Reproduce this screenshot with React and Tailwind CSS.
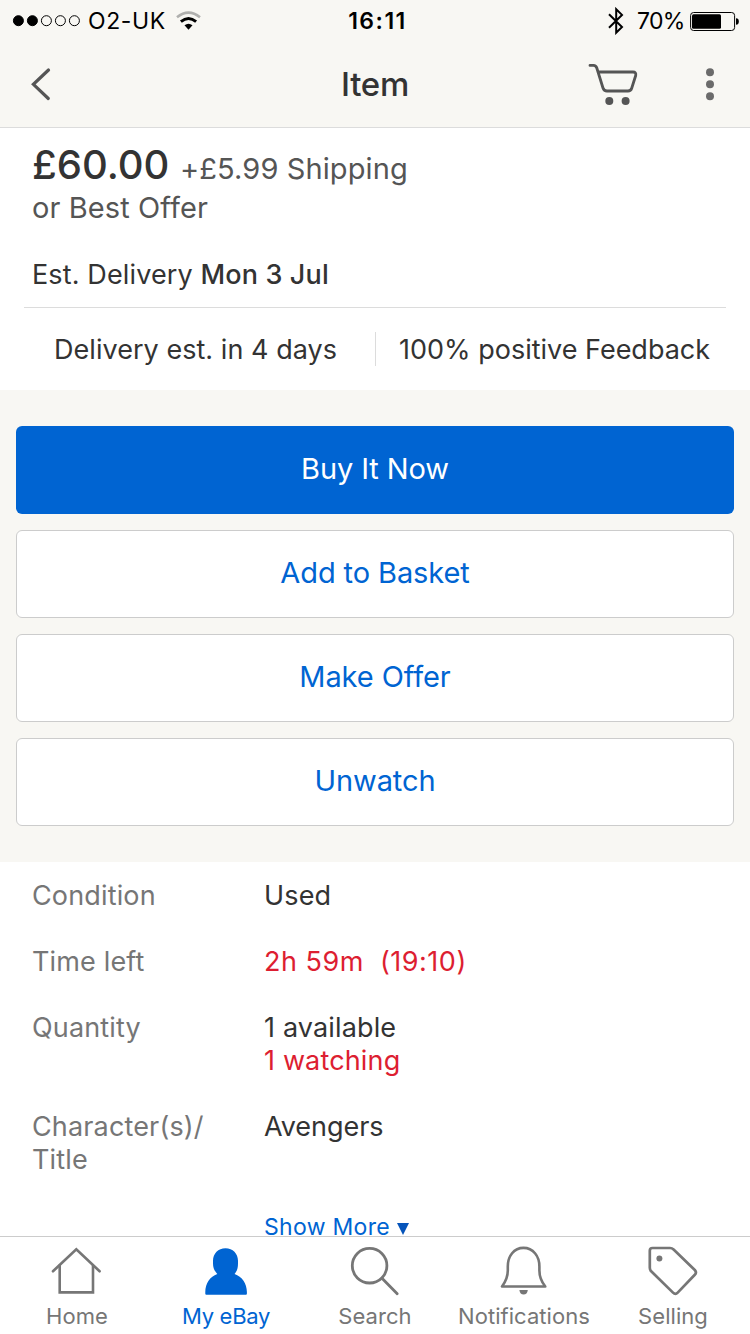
import { useState } from "react";

const HomeIcon = () => (
  <svg width="51" height="52" viewBox="0 0 51 52" fill="none" stroke="currentColor" strokeWidth="2.6" strokeLinecap="round">
    <path d="M2 26.3 L25.3 4.2 L48.6 26.3" />
    <path d="M8.7 20.5 V47.4 H42 V20.5" />
  </svg>
);

const PersonIcon = () => (
  <svg width="51" height="52" viewBox="0 0 51 52" fill="currentColor">
    <path d="M25.5 3.3 C18.2 3.3 13 8.6 13 15.8 V18.5 C13 22.8 14.7 26.4 17.3 28.9 C10 31.4 5.3 38.5 5.3 47 V48.7 Q5.3 49.7 6.3 49.7 H45.9 Q46.9 49.7 46.9 48.7 V47 C46.9 38.5 42 31.4 34.6 28.9 C37 26.4 38 22.8 38 18.5 V15.8 C38 8.6 32.8 3.3 25.5 3.3 Z" />
  </svg>
);

const SearchIcon = () => (
  <svg width="51" height="52" viewBox="0 0 51 52" fill="none" stroke="currentColor" strokeWidth="2.8" strokeLinecap="round">
    <circle cx="20.6" cy="20.7" r="17.3" />
    <path d="M33 33.3 L48.2 48.8" />
  </svg>
);

const BellIcon = () => (
  <svg width="51" height="52" viewBox="0 0 51 52" fill="none" stroke="currentColor" strokeWidth="2.6" strokeLinejoin="round">
    <path d="M25.5 2.9 C16 2.9 9.8 11 9.8 21.5 V25.5 C9.8 33 7 37.5 4 41.5 H47.3 C44 37.5 41.4 33 41.4 25.5 V21.5 C41.4 11 35 2.9 25.5 2.9 Z" />
    <path d="M21.4 45 H29.8 Q29.2 49.6 25.6 49.6 Q22 49.6 21.4 45 Z" fill="currentColor" stroke="none" />
  </svg>
);

const TagIcon = () => (
  <svg width="51" height="52" viewBox="0 0 51 52" fill="none" stroke="currentColor" strokeWidth="2.7" strokeLinejoin="round">
    <path d="M5.5 3 H23 Q25 3 26.6 4.5 L47.8 25 Q50 27.5 47.8 29.8 L30.7 47.6 Q28.4 50 26 47.6 L4.2 26.3 Q2.8 24.8 2.8 22.8 V5.7 Q2.8 3 5.5 3 Z" />
    <circle cx="12.4" cy="13.4" r="3" fill="currentColor" stroke="none" />
  </svg>
);

const tabs = [
  { label: "Home", icon: HomeIcon },
  { label: "My eBay", icon: PersonIcon },
  { label: "Search", icon: SearchIcon },
  { label: "Notifications", icon: BellIcon },
  { label: "Selling", icon: TagIcon },
];

function StatusBar() {
  return (
    <div className="grid h-10 grid-cols-3 text-[23px] leading-10 text-black">
      <div className="flex items-center pl-3">
        <svg width="70" height="14" viewBox="0 0 70 14" stroke="black">
          <circle cx="6.4" cy="6.7" r="5" fill="black" />
          <circle cx="20.4" cy="6.7" r="5" fill="black" />
          <circle cx="34.4" cy="6.7" r="5" fill="none" />
          <circle cx="48.4" cy="6.7" r="5" fill="none" />
          <circle cx="62.4" cy="6.7" r="5" fill="none" />
        </svg>
        <span className="ml-1.5 w-[88px] whitespace-nowrap pt-px tracking-[0.6px]">O2-UK</span>
        <svg width="26" height="20" viewBox="0 0 26 20" fill="none">
          <path d="M1 6.2 Q12.5 -2.9 24 6.2" stroke="#b0b0ae" strokeWidth="2.6" />
          <path d="M4.9 10.7 Q12.5 4.3 20.1 10.7" stroke="black" strokeWidth="2.9" />
          <path d="M8.5 14.3 Q12.5 11 16.5 14.3 L12.5 18.8 Z" fill="black" />
        </svg>
      </div>

      <div className="pt-px pl-[5px] text-center font-semibold tracking-[1.5px]">16:11</div>

      <div className="flex items-center justify-end pr-[10px]">
        <svg width="18" height="28" viewBox="0 0 18 28" fill="none" stroke="black" strokeWidth="2">
          <path d="M2 7.2 L15 20 L9.2 25.7 V2.2 L15 7.9 L2 20.7" />
        </svg>
        <span className="ml-3 w-[53px] whitespace-nowrap pt-px tracking-[-0.7px]">70%</span>
        <svg width="50" height="20" viewBox="0 0 50 20">
          <rect x="0.6" y="1.5" width="44" height="18" rx="3" fill="none" stroke="black" />
          <rect x="2" y="3.2" width="29" height="14.6" rx="1.5" fill="black" />
          <path d="M46 7.2 Q48.8 7.2 48.8 10.5 Q48.8 13.8 46 13.8 Z" fill="black" />
        </svg>
      </div>
    </div>
  );
}

function NavBar() {
  return (
    <div className="grid h-[87px] grid-cols-3 items-center">
      <svg className="ml-7" width="26" height="36" viewBox="0 0 26 36" fill="none" stroke="#555" strokeWidth="3.2" strokeLinecap="round">
        <path d="M20.5 4 L5.4 18.3 L20.3 32.5" />
      </svg>
      <h1 className="pt-px text-center text-[33px] leading-10 font-medium tracking-[-0.3px]">Item</h1>
      <div className="flex items-center justify-end pr-[30px]">
        <svg width="52" height="44" viewBox="0 0 52 44" fill="none" stroke="#555" strokeWidth="2.8" strokeLinecap="round" strokeLinejoin="round">
          <path d="M3 3.4 H6.5 Q9 3.4 9.8 6 L16 26 Q17 29 20 29 H41 Q43.8 29 44.7 26.2 L48.7 13.5 Q49.4 10 46 10 H11.2" />
          <circle cx="22.3" cy="39" r="4" fill="#555" stroke="none" />
          <circle cx="38.6" cy="39" r="4" fill="#555" stroke="none" />
        </svg>
        <svg className="ml-[66px]" width="15" height="36" viewBox="0 0 15 36" fill="#6b6b6b">
          <circle cx="5" cy="6.3" r="4" />
          <circle cx="5" cy="18.3" r="4" />
          <circle cx="5" cy="30.3" r="4" />
        </svg>
      </div>
    </div>
  );
}

function Row({ label, children }) {
  return (
    <div className="flex">
      <div className="w-[232px] pr-8 text-[#767676]">{label}</div>
      <div>{children}</div>
    </div>
  );
}

function App() {
  const [active, setActive] = useState("My eBay");

  return (
    <div className="flex h-[1334px] w-[750px] flex-col overflow-hidden bg-white font-['Inter',sans-serif] text-[#333]">
      <header className="h-32 shrink-0 border-b border-[#dcdcdc] bg-[#f8f7f3]">
        <StatusBar />
        <NavBar />
      </header>

      <main className="min-h-0 flex-1 overflow-hidden">
        {/* Price */}
        <section className="h-[262px] px-6 pt-3">
          <div className="px-2">
            <div className="flex h-[50px] items-baseline leading-[50px]">
              <span className="w-[148px] text-[40px] font-medium">£60.00</span>
              <span className="text-[29px] tracking-[0.1px] text-[#555]">+£5.99 Shipping</span>
            </div>
            <div className="pt-px text-[29px] leading-[34px] tracking-[0.1px] text-[#555]">or Best Offer</div>
            <div className="mt-[33px] text-[27px] leading-[34px] tracking-[0.13px]">
              Est. Delivery <span className="font-medium">Mon 3 Jul</span>
            </div>
          </div>
          <div className="mt-[15px] flex items-start border-t border-[#dcdcdc] pt-6 text-[27px] leading-[34px] tracking-[0.04px]">
            <div className="w-[351px] pt-px pl-[30px]">Delivery est. in 4 days</div>
            <div className="h-[34px] flex-1 whitespace-nowrap border-l border-[#dcdcdc] pt-px pl-[23px] tracking-normal">
              100% positive Feedback
            </div>
          </div>
        </section>

        {/* Actions */}
        <section className="flex h-[472px] flex-col gap-4 bg-[#f8f7f3] px-4 py-9 text-[29px] tracking-[-0.1px] text-[#0064d2]">
          <button className="h-[88px] rounded-md bg-[#0064d2] pb-0.5 text-white">Buy It Now</button>
          <button className="h-[88px] rounded-md border border-[#ccc] bg-white pb-0.5">Add to Basket</button>
          <button className="h-[88px] rounded-md border border-[#ccc] bg-white pb-0.5">Make Offer</button>
          <button className="h-[88px] rounded-md border border-[#ccc] bg-white pb-0.5">Unwatch</button>
        </section>

        {/* Item details */}
        <section className="flex flex-col gap-[33px] px-8 pt-[17px] text-[27px] leading-[33px] tracking-[0.15px]">
          <Row label="Condition">Used</Row>
          <Row label="Time left">
            <span className="whitespace-pre tracking-[0.5px] text-[#dd1e31]">2h 59m  (19:10)</span>
          </Row>
          <Row label="Quantity">
            <div>1 available</div>
            <div className="text-[#dd1e31]">1 watching</div>
          </Row>
          <Row label="Character(s)/ Title">
            <span className="tracking-[-0.05px]">Avengers</span>
          </Row>
          <button className="ml-[232px] flex items-center pt-0.5 text-[23px] leading-[33px] tracking-[0.3px] text-[#0064d2]">
            Show More
            <svg className="mt-0.5 ml-[7px]" width="12" height="12" viewBox="0 0 12 12" fill="#0654ba">
              <path d="M0 0 H12 L6 12 Z" />
            </svg>
          </button>
        </section>
      </main>

      <nav className="flex h-[98px] shrink-0 border-t border-[#ccc] bg-white pl-0.5">
        {tabs.map(({ label, icon: Icon }) => (
          <button
            key={label}
            onClick={() => setActive(label)}
            className={`flex w-[149px] flex-col items-center pt-2 ${active === label ? "tracking-[-0.3px] text-[#0064d2]" : "tracking-[0.05px] text-[#767676]"}`}
          >
            <Icon />
            <span className="mt-1.5 ml-px whitespace-nowrap text-[22px] leading-[26px]">{label}</span>
          </button>
        ))}
      </nav>
    </div>
  );
}

export default App;
